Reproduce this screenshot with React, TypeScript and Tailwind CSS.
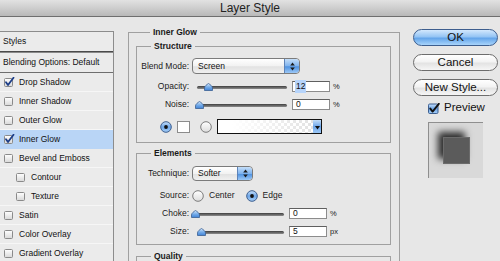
import React from "react";

const sans = "font-['Liberation_Sans',Arial,sans-serif]";

function SmallCheck({ checked }: { checked?: boolean }) {
  return (
    <svg width="11" height="10" viewBox="0 0 11 10" className="shrink-0">
      <defs>
        <linearGradient id="cbg" x1="0" y1="0" x2="0" y2="1">
          <stop offset="0" stopColor="#ffffff" />
          <stop offset="1" stopColor="#d8d8d8" />
        </linearGradient>
      </defs>
      <rect x="0.5" y="1.5" width="8" height="8" rx="1" fill="url(#cbg)" stroke="#8a8a8a" />
      {checked && (
        <path d="M2 5.2 L4 8 L9.5 0.8" fill="none" stroke="#1c3d87" strokeWidth="1.8" strokeLinecap="round" strokeLinejoin="round" />
      )}
    </svg>
  );
}

function StyleRow({
  label,
  checked,
  indent,
  active,
}: {
  label: string;
  checked?: boolean;
  indent?: boolean;
  active?: boolean;
}) {
  return (
    <div
      className={`flex h-[19px] items-center gap-[4px] border-b ${
        active ? "bg-[#b9d5f6] border-[#b9d5f6]" : "border-[#f6f6f6]"
      } ${indent ? "pl-[16px]" : "pl-[4px]"}`}
    >
      <SmallCheck checked={checked} />
      <span>{label}</span>
    </div>
  );
}

function Stepper() {
  return (
    <div className="flex h-full w-[15px] items-center justify-center rounded-r-[3px] border-l border-[#5d83b8] bg-[linear-gradient(#c4def9,#7fb3ee_50%,#4f92e0_55%,#9cc8f6)]">
      <svg width="5" height="9" viewBox="0 0 5 9">
        <path d="M2.5 0.5 L4.8 3.6 L0.2 3.6 Z" fill="#1a1a1a" />
        <path d="M2.5 8.5 L4.8 5.4 L0.2 5.4 Z" fill="#1a1a1a" />
      </svg>
    </div>
  );
}

function Select({ value, className }: { value: string; className: string }) {
  return (
    <div
      className={`flex items-center overflow-hidden rounded-[4px] border border-[#7b7b7b] bg-[linear-gradient(#ffffff,#f2f2f2_50%,#e2e2e2_55%,#f0f0f0)] ${className}`}
    >
      <span className="flex-1 pl-[5px] text-[8.5px] text-[#111]">{value}</span>
      <Stepper />
    </div>
  );
}

function Thumb({ className }: { className: string }) {
  return (
    <svg width="9" height="8" viewBox="0 0 9 8" className={`absolute top-[2px] ${className}`}>
      <defs>
        <linearGradient id="thg" x1="0" y1="0" x2="0" y2="1">
          <stop offset="0" stopColor="#d2e6fb" />
          <stop offset="0.5" stopColor="#78aeea" />
          <stop offset="1" stopColor="#3f82d6" />
        </linearGradient>
      </defs>
      <path d="M4.5 0.5 C6 1.5 8.5 3 8.5 5 L8.5 7.5 L0.5 7.5 L0.5 5 C0.5 3 3 1.5 4.5 0.5 Z" fill="url(#thg)" stroke="#3b5f92" strokeWidth="0.8" />
    </svg>
  );
}

function Slider({ className, thumb }: { className: string; thumb: string }) {
  return (
    <div className={`relative h-[11px] ${className}`}>
      <div className="absolute left-[2px] right-0 top-[5px] h-[3px] rounded-full bg-[linear-gradient(#3e3e3e,#8d8d8d)]" />
      <Thumb className={thumb} />
    </div>
  );
}

function Field({ value, selected }: { value: string; selected?: boolean }) {
  return (
    <div className="flex h-[11px] w-[38px] items-center border border-[#8c8c8c] border-t-[#5f5f5f] bg-white pl-[2px] text-[8.5px] text-[#111]">
      <span className={selected ? "bg-[#b6d4fb] px-[1px]" : "px-[1px]"}>{value}</span>
    </div>
  );
}

function Radio({ on }: { on?: boolean }) {
  return (
    <svg width="12" height="12" viewBox="0 0 12 12" className="shrink-0">
      <defs>
        <linearGradient id="rOn" x1="0" y1="0" x2="0" y2="1">
          <stop offset="0" stopColor="#c8e0fa" />
          <stop offset="0.5" stopColor="#6fa7e8" />
          <stop offset="1" stopColor="#a9d0f8" />
        </linearGradient>
        <linearGradient id="rOff" x1="0" y1="0" x2="0" y2="1">
          <stop offset="0" stopColor="#ffffff" />
          <stop offset="1" stopColor="#dcdcdc" />
        </linearGradient>
      </defs>
      <circle cx="6" cy="6" r="5.3" fill={on ? "url(#rOn)" : "url(#rOff)"} stroke={on ? "#3d5f90" : "#7c7c7c"} />
      {on && <circle cx="6" cy="6" r="1.9" fill="#111" />}
    </svg>
  );
}

function SliderRow({
  label,
  value,
  unit,
  selected,
  track,
  thumb,
}: {
  label: string;
  value: string;
  unit: string;
  selected?: boolean;
  track: string;
  thumb: string;
}) {
  return (
    <div className="mt-[7px] flex h-[11px] items-center">
      <span className="w-[55px] pr-[3px] text-right">{label}</span>
      <Slider className={track} thumb={thumb} />
      <div className="ml-[5px]">
        <Field value={value} selected={selected} />
      </div>
      <span className="ml-[3px] text-[7.5px]">{unit}</span>
    </div>
  );
}

export default function App() {
  return (
    <div className={`${sans} h-[261px] w-[500px] overflow-hidden bg-[#e7e7e7] text-[8.5px] text-[#1a1a1a]`}>
      {/* title bar */}
      <div className="flex h-[17px] items-center justify-center border-b border-[#6f6f6f] bg-[linear-gradient(#e2e2e2,#b9b9b9)] text-[12px] text-[#222]">
        Layer Style
      </div>

      <div className="flex">
        {/* styles list */}
        <div className="mt-[14px] w-[114px] shrink-0 border-r border-t border-[#8c8c8c] bg-[#ebebeb] text-[#111]">
          <div className="flex h-[19px] items-center pl-[3px]">Styles</div>
          <div className="h-[2px] border-b border-t border-b-[#8a8a8a] border-t-[#4a4a4a]" />
          <div className="flex h-[20px] items-center border-b border-[#6e6e6e] pl-[3px]">
            Blending Options: Default
          </div>
          <StyleRow label="Drop Shadow" checked />
          <StyleRow label="Inner Shadow" />
          <StyleRow label="Outer Glow" />
          <StyleRow label="Inner Glow" checked active />
          <StyleRow label="Bevel and Emboss" />
          <StyleRow label="Contour" indent />
          <StyleRow label="Texture" indent />
          <StyleRow label="Satin" />
          <StyleRow label="Color Overlay" />
          <StyleRow label="Gradient Overlay" />
        </div>

        {/* settings */}
        <fieldset className="ml-[14px] mt-[10px] h-[300px] w-[272px] shrink-0 border border-[#a0a0a0] pl-[7px]">
          <legend className="ml-[14px] px-[3px] font-bold leading-[10px]">Inner Glow</legend>

          <fieldset className="mt-[4px] w-[255px] border border-[#a0a0a0] pb-[8px]">
            <legend className="ml-[14px] px-[3px] font-bold leading-[10px]">Structure</legend>
            <div className="mt-[7px] flex h-[16px] items-center">
              <span className="w-[55px] pr-[3px] text-right">Blend Mode:</span>
              <Select value="Screen" className="h-[16px] w-[108px]" />
            </div>
            <SliderRow label="Opacity:" value="12" unit="%" selected track="w-[92px] ml-[3px]" thumb="left-[9px]" />
            <SliderRow label="Noise:" value="0" unit="%" track="w-[92px] ml-[3px]" thumb="left-[0px]" />
            <div className="mt-[9px] flex h-[15px] items-center pl-[23px]">
              <Radio on />
              <div className="ml-[5px] h-[12px] w-[13px] border border-[#8c8c8c] bg-white" />
              <div className="ml-[10px]">
                <Radio />
              </div>
              <div className="ml-[5px] flex h-[15px] w-[105px] border border-[#111]">
                <div className="flex-1 bg-[conic-gradient(#e2e2e2_25%,#ffffff_0_50%,#e2e2e2_0_75%,#ffffff_0)] bg-[length:6px_6px]">
                  <div className="h-full w-full bg-[linear-gradient(90deg,#ffffff_15%,rgba(255,255,255,0))]" />
                </div>
                <div className="flex w-[8px] items-end justify-center bg-[linear-gradient(#c4def9,#6ea6ea_50%,#9cc8f6)] pb-[3px]">
                  <svg width="5" height="4" viewBox="0 0 5 4">
                    <path d="M0 0 L5 0 L2.5 3.5 Z" fill="#111" />
                  </svg>
                </div>
              </div>
            </div>
          </fieldset>

          <fieldset className="mt-[5px] w-[255px] border border-[#a0a0a0] pb-[7px]">
            <legend className="ml-[14px] px-[3px] font-bold leading-[10px]">Elements</legend>
            <div className="mt-[8px] flex h-[15px] items-center">
              <span className="w-[55px] pr-[3px] text-right">Technique:</span>
              <Select value="Softer" className="h-[15px] w-[61px]" />
            </div>
            <div className="mt-[9px] flex h-[11px] items-center">
              <span className="w-[52px] text-right">Source:</span>
              <div className="ml-[3px]">
                <Radio />
              </div>
              <span className="ml-[5px]">Center</span>
              <div className="ml-[11px]">
                <Radio on />
              </div>
              <span className="ml-[5px]">Edge</span>
            </div>
            <SliderRow label="Choke:" value="0" unit="%" track="w-[92px] ml-[0px]" thumb="left-[-1px]" />
            <SliderRow label="Size:" value="5" unit="px" track="w-[87px] ml-[5px]" thumb="left-[0px]" />
          </fieldset>

          <fieldset className="mt-[6px] h-[30px] w-[255px] border border-[#a0a0a0]">
            <legend className="ml-[14px] px-[3px] font-bold leading-[10px]">Quality</legend>
          </fieldset>
        </fieldset>

        {/* buttons */}
        <div className="ml-[13px] flex w-[85px] shrink-0 flex-col text-[11.5px] text-[#111]">
          <button className="mt-[12px] flex h-[17px] w-[85px] items-center justify-center rounded-full border border-[#3d5e8e] bg-[linear-gradient(#d3e8fd,#94c4f4_45%,#64a5ea_55%,#a8d4fb)]">
            OK
          </button>
          <button className="mt-[8px] flex h-[17px] w-[85px] items-center justify-center rounded-full border border-[#6d6d6d] bg-[linear-gradient(#ffffff,#f3f3f3_45%,#e3e3e3_55%,#f6f6f6)]">
            Cancel
          </button>
          <button className="mt-[8px] flex h-[17px] w-[85px] items-center justify-center rounded-full border border-[#6d6d6d] bg-[linear-gradient(#ffffff,#f3f3f3_45%,#e3e3e3_55%,#f6f6f6)]">
            New Style...
          </button>
          <div className="ml-[15px] mt-[7px] flex h-[10px] items-center gap-[4px]">
            <svg width="12" height="11" viewBox="0 0 12 11" className="shrink-0">
              <defs>
                <linearGradient id="pcb" x1="0" y1="0" x2="0" y2="1">
                  <stop offset="0" stopColor="#c6dffa" />
                  <stop offset="0.5" stopColor="#6ea6e8" />
                  <stop offset="1" stopColor="#a7cff8" />
                </linearGradient>
              </defs>
              <rect x="0.5" y="1" width="9.5" height="9.5" rx="1.2" fill="url(#pcb)" stroke="#3d5f90" />
              <path d="M2.3 5.6 L4.6 8.6 L10.8 0.8" fill="none" stroke="#111" strokeWidth="1.9" strokeLinecap="round" strokeLinejoin="round" />
            </svg>
            <span>Preview</span>
          </div>
          <div className="ml-[15px] mt-[9px] h-[56px] w-[55px] border-l border-t border-[#8f8f8f] bg-[#d9d9d9] pl-[14px] pt-[14px]">
            <div className="h-[27px] w-[27px] border border-[#6b6b6b] bg-[#5b5b5b] shadow-[-5px_-5px_7px_rgba(0,0,0,0.8)]" />
          </div>
        </div>
      </div>
    </div>
  );
}
